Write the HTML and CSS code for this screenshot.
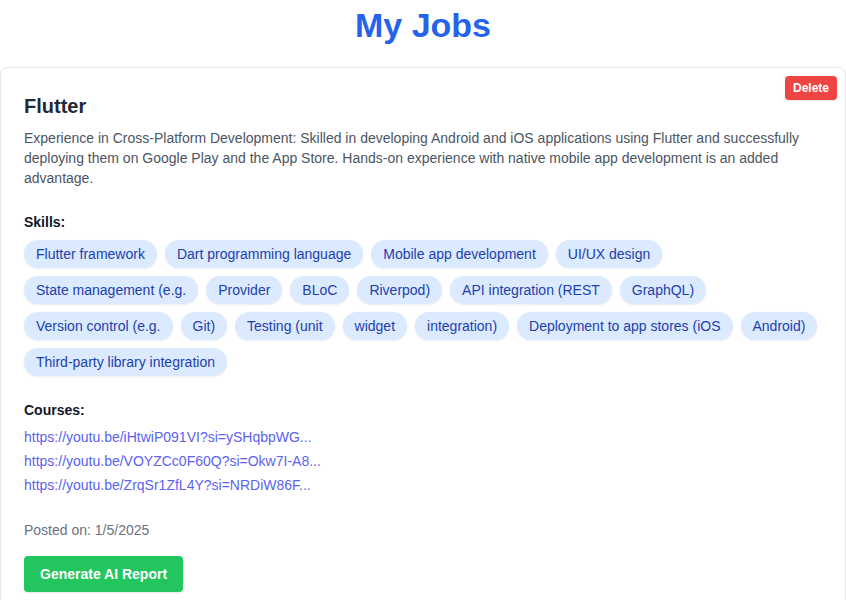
FILE: index.html
```html
<!DOCTYPE html>
<html>
<head>
<meta charset="utf-8">
<link rel="stylesheet" href="styles.css">
</head>
<body>
<h1 class="page-title">My Jobs</h1>
<div class="card">
  <button class="delete-btn">Delete</button>
  <h2 class="job-title">Flutter</h2>
  <p class="job-desc">Experience in Cross-Platform Development: Skilled in developing Android and iOS applications using Flutter and successfully deploying them on Google Play and the App Store. Hands-on experience with native mobile app development is an added advantage.</p>
  <div class="section">
    <h3 class="section-label">Skills:</h3>
    <div class="tags">
      <span class="tag">Flutter framework</span>
      <span class="tag">Dart programming language</span>
      <span class="tag">Mobile app development</span>
      <span class="tag">UI/UX design</span>
      <span class="tag">State management (e.g.</span>
      <span class="tag">Provider</span>
      <span class="tag">BLoC</span>
      <span class="tag">Riverpod)</span>
      <span class="tag">API integration (REST</span>
      <span class="tag">GraphQL)</span>
      <span class="tag">Version control (e.g.</span>
      <span class="tag">Git)</span>
      <span class="tag">Testing (unit</span>
      <span class="tag">widget</span>
      <span class="tag">integration)</span>
      <span class="tag">Deployment to app stores (iOS</span>
      <span class="tag">Android)</span>
      <span class="tag">Third-party library integration</span>
    </div>
  </div>
  <div class="section">
    <h3 class="section-label courses-label">Courses:</h3>
    <div class="links">
      <a class="link" href="#">https://youtu.be/iHtwiP091VI?si=ySHqbpWG...</a>
      <a class="link" href="#">https://youtu.be/VOYZCc0F60Q?si=Okw7I-A8...</a>
      <a class="link" href="#">https://youtu.be/ZrqSr1ZfL4Y?si=NRDiW86F...</a>
    </div>
  </div>
  <p class="posted">Posted on: 1/5/2025</p>
  <button class="report-btn">Generate AI Report</button>
</div>
</body>
</html>
```
FILE: styles.css
```css
* { box-sizing: border-box; }
body {
  margin: 0;
  font-family: "Liberation Sans", Arial, sans-serif;
  background: #ffffff;
  color: #1f2937;
}
.page-title {
  margin: 0;
  padding-top: 4px;
  height: 67px;
  text-align: center;
  font-size: 34px;
  line-height: 42px;
  font-weight: 700;
  color: #2563eb;
}
.card {
  position: relative;
  border: 1px solid #e5e7eb;
  border-radius: 8px;
  padding: 24px 23px;
  box-shadow: 0 1px 3px rgba(0,0,0,0.06);
  background: #fff;
}
.delete-btn {
  position: absolute;
  top: 8px;
  right: 8px;
  border: none;
  background: #ef4444;
  color: #fff;
  font-family: inherit;
  font-weight: 700;
  font-size: 12px;
  line-height: 16px;
  padding: 4px 8px;
  border-radius: 4px;
  box-shadow: 0 1px 2px rgba(0,0,0,0.1);
}
.job-title {
  margin: 0 0 8px;
  font-size: 20px;
  line-height: 28px;
  font-weight: 700;
  color: #1f2937;
}
.job-desc {
  margin: 0;
  font-size: 14px;
  line-height: 20px;
  color: #4b5563;
}
.section { margin-top: 24px; }
.section-label {
  margin: 0 0 8px;
  font-size: 14px;
  line-height: 20px;
  font-weight: 700;
  color: #111827;
}
.courses-label { margin-bottom: 7px; }
.tags {
  display: flex;
  flex-wrap: wrap;
  gap: 8px;
}
.tag {
  background: #dbeafe;
  color: #1e40af;
  font-size: 14px;
  line-height: 20px;
  padding: 4px 12px;
  border-radius: 14px;
  box-shadow: 0 1px 2px rgba(0,0,0,0.08);
}
.links {
  display: flex;
  flex-direction: column;
  align-items: flex-start;
  gap: 4px;
}
.link {
  font-size: 14px;
  line-height: 20px;
  color: #5b63f0;
  text-decoration: none;
}
.posted {
  margin: 25px 0 16px;
  font-size: 14px;
  line-height: 20px;
  color: #6b7280;
}
.report-btn {
  border: none;
  background: #22c55e;
  color: #fff;
  font-family: inherit;
  font-weight: 700;
  font-size: 14px;
  line-height: 20px;
  padding: 8px 16px;
  border-radius: 4px;
  box-shadow: 0 1px 2px rgba(0,0,0,0.1);
}
```
